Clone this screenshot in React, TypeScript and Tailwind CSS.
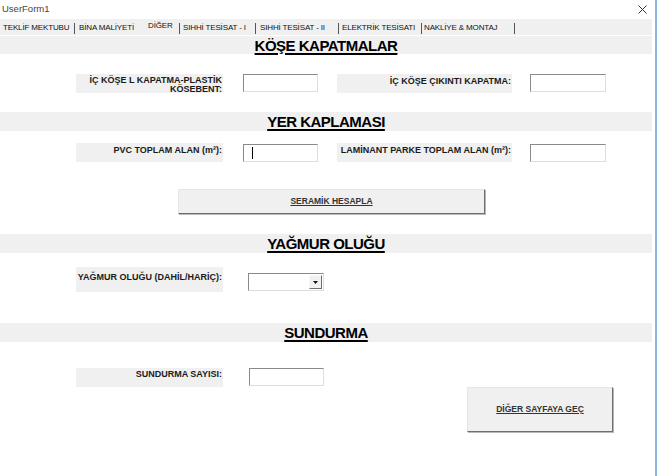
import React from 'react';

const font = { fontFamily: '"Liberation Sans", Arial, sans-serif' };

// one gray header band with centered underlined title
const Band = ({ title, className }: { title: string; className: string }) => (
    <div className={`w-[652px] bg-[#f0f0f0] flex items-center justify-center ${className}`}>
        <span className="text-[15px] tracking-[-0.5px] font-bold leading-none text-black underline decoration-2 underline-offset-2">{title}</span>
    </div>
);

const Label = ({ children, className }: { children: React.ReactNode; className: string }) => (
    <div className={`bg-[#f0f0f0] pr-px text-right text-[9px] font-bold leading-[9px] text-[#1a1a1a] whitespace-nowrap ${className}`}>
        {children}
    </div>
);

const Input = ({ className, cursor }: { className: string; cursor?: boolean }) => (
    <div className={`h-[18px] bg-white border border-t-[#8a8a8a] border-l-[#8a8a8a] border-r-[#dedede] border-b-[#dedede] flex items-center ${className}`}>
        {cursor && <div className="ml-[8px] w-px h-[12px] bg-black" />}
    </div>
);

const Tab = ({ text, w, active }: { text: string; w: string; active?: boolean }) => (
    <span className={`${w} whitespace-nowrap text-[8px] tracking-[-0.15px] text-[#111] mt-[2px] ${active ? 'mb-[4px]' : ''}`}>{text}</span>
);

const Sep = ({ className }: { className: string }) => <div className={`w-px h-[11px] mt-[2px] bg-[#555] ${className}`} />;

const App: React.FC = () => {
    return (
        <div className="w-[659px] h-[476px] bg-white flex overflow-hidden" style={font}>
            <div className="w-[655px] flex flex-col">
                {/* title bar */}
                <div className="h-[19px] flex items-center justify-between pl-[2px] pr-[8px]">
                    <span className="text-[9.5px] text-[#444]">UserForm1</span>
                    <svg width="9" height="9" viewBox="0 0 9 9">
                        <path d="M0.5 0.5 L8.5 8.5 M8.5 0.5 L0.5 8.5" stroke="#333" strokeWidth="1" />
                    </svg>
                </div>

                {/* tabs */}
                <div className="h-[16px] w-[652px] bg-[#f0f0f0] flex items-center pl-[3px]">
                    <Tab text="TEKLİF MEKTUBU" w="w-[66px]" />
                    <Sep className="ml-[5px]" />
                    <div className="w-[4px]" />
                    <Tab text="BİNA MALİYETİ" w="w-[58px]" />
                    <div className="w-[11px]" />
                    <Tab text="DİĞER" w="w-[25px]" active />
                    <Sep className="ml-[6px]" />
                    <div className="w-[3px]" />
                    <Tab text="SIHHİ TESİSAT - I" w="w-[68px]" />
                    <Sep className="ml-[4px]" />
                    <div className="w-[4px]" />
                    <Tab text="SIHHİ TESİSAT - II" w="w-[77px]" />
                    <Sep className="ml-px" />
                    <div className="w-[3px]" />
                    <Tab text="ELEKTRİK TESİSATI" w="w-[75px]" />
                    <Sep className="ml-[4px]" />
                    <div className="w-[2px]" />
                    <Tab text="NAKLİYE & MONTAJ" w="w-[86px]" />
                    <Sep className="ml-[4px]" />
                </div>

                <Band title="KÖŞE KAPATMALAR" className="mt-px h-[18px]" />

                {/* row 1 */}
                <div className="mt-[20px] ml-[76px] flex items-start">
                    <Label className="w-[147px] h-[19px] pt-[2px]">
                        İÇ KÖŞE L KAPATMA-PLASTİK
                        <br />
                        KÖSEBENT:
                    </Label>
                    <Input className="ml-[20px] w-[75px]" />
                    <Label className="ml-[19px] w-[175px] h-[19px] pt-[3px]">İÇ KÖŞE ÇIKINTI KAPATMA:</Label>
                    <Input className="ml-[18px] w-[76px]" />
                </div>

                <Band title="YER KAPLAMASI" className="mt-[19px] h-[19px]" />

                {/* row 2 */}
                <div className="mt-[12px] ml-[76px] flex items-start">
                    <Label className="w-[147px] h-[19px] pt-[3px]">PVC TOPLAM ALAN (m²):</Label>
                    <Input className="ml-[20px] mt-px w-[75px]" cursor />
                    <Label className="ml-[19px] w-[175px] h-[19px] pt-[3px]">LAMİNANT PARKE TOPLAM ALAN (m²):</Label>
                    <Input className="ml-[18px] mt-px w-[76px]" />
                </div>

                <button className="mt-[27px] ml-[178px] w-[307px] h-[25px] bg-[#f0f0f0] border border-t-[#e6e6e6] border-l-[#e6e6e6] border-r-[#6e6e6e] border-b-[#6e6e6e] shadow-[1px_1px_0_#b8b8b8] flex items-center justify-center">
                    <span className="text-[8.5px] font-bold text-[#333] underline">SERAMİK HESAPLA</span>
                </button>

                <Band title="YAĞMUR OLUĞU" className="mt-[20px] h-[19px]" />

                {/* row 3 */}
                <div className="mt-[14px] ml-[76px] flex items-start">
                    <Label className="w-[147px] h-[25px] pt-[6px]">YAĞMUR OLUĞU (DAHİL/HARİÇ):</Label>
                    <div className="ml-[25px] mt-[6px] w-[76px] h-[18px] bg-white border border-t-[#8a8a8a] border-l-[#8a8a8a] border-r-[#dedede] border-b-[#dedede] flex items-center justify-end pr-px">
                        <div className="w-[13px] h-[14px] bg-[#f0f0f0] border border-t-[#f8f8f8] border-l-[#f8f8f8] border-r-[#6e6e6e] border-b-[#6e6e6e] flex flex-col items-center justify-center gap-px">
                            <svg width="5" height="3" viewBox="0 0 5 3">
                                <path d="M0 0 H5 L2.5 3 Z" fill="#111" />
                            </svg>
                        </div>
                    </div>
                </div>

                <Band title="SUNDURMA" className="mt-[31px] h-[19px]" />

                {/* row 4 */}
                <div className="mt-[26px] ml-[76px] flex items-start">
                    <Label className="w-[147px] h-[19px] pt-[2px]">SUNDURMA SAYISI:</Label>
                    <Input className="ml-[26px] w-[75px]" />
                </div>

                <button className="ml-[467px] w-[146px] h-[45px] bg-[#f0f0f0] border border-t-[#e6e6e6] border-l-[#e6e6e6] border-r-[#6e6e6e] border-b-[#6e6e6e] shadow-[1px_1px_0_#b8b8b8] flex items-center justify-center">
                    <span className="text-[8.5px] font-bold text-[#333] underline">DİĞER SAYFAYA GEÇ</span>
                </button>
            </div>

            {/* window edge */}
            <div className="w-[2px] h-full bg-[#8fb6dc]" />
        </div>
    );
};

export default App;
